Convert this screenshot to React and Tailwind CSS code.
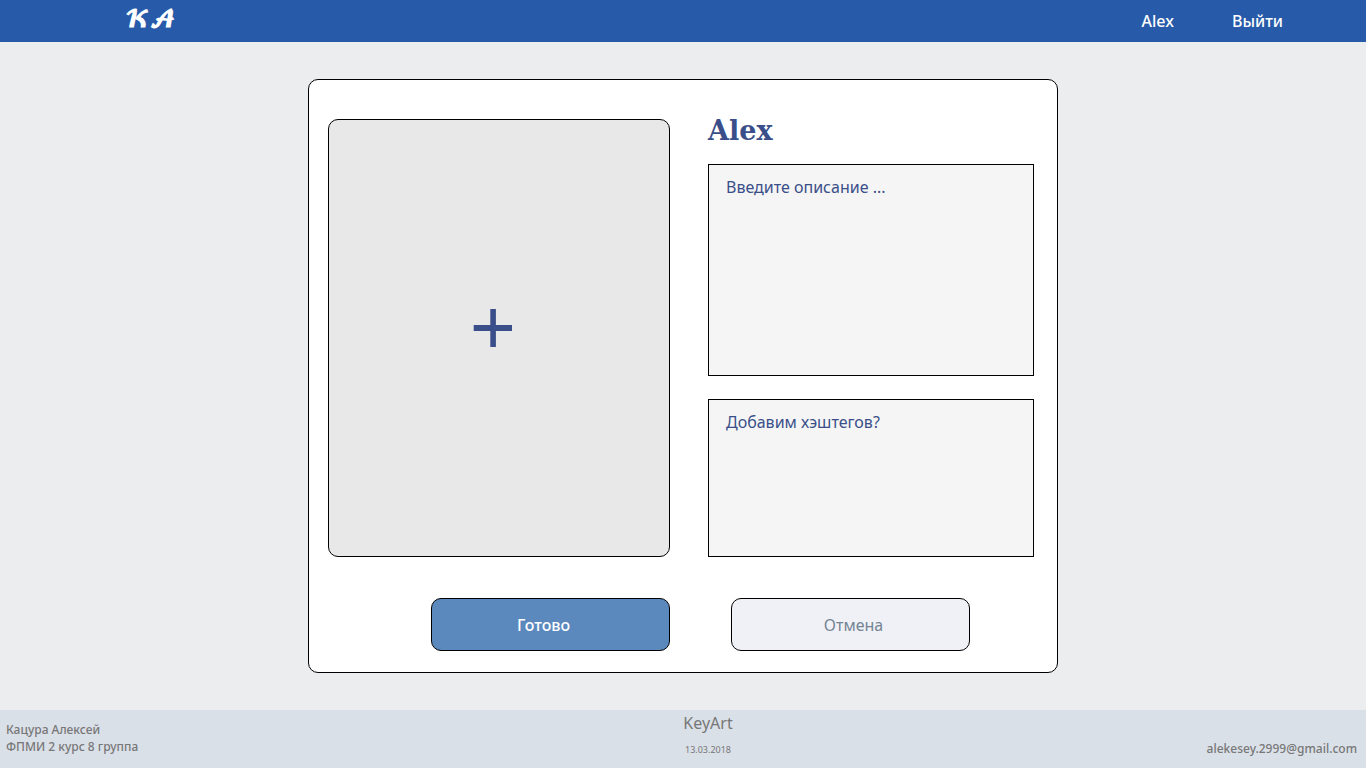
import React from "react";

function Header() {
  return (
    <header className="flex h-[42px] items-center justify-between bg-[#275aa9] pr-[83px] pl-[125px] text-white">
      <a
        href="#home"
        aria-label="KeyArt"
        className="font-['DejaVu_Math_TeX_Gyre','DejaVu_Serif',serif] text-[22px] leading-6 font-bold"
      >
        𝓚𝓐
      </a>
      <nav className="flex gap-[58px] text-base font-medium">
        <a href="#profile">Alex</a>
        <a href="#logout">Выйти</a>
      </nav>
    </header>
  );
}

function Upload() {
  return (
    <button
      type="button"
      aria-label="Добавить изображение"
      className="flex min-h-[438px] items-center justify-center rounded-[10px] border border-black bg-[#e8e8e8] pr-3 pb-5 text-[#3a4f89]"
    >
      <svg width="40" height="40" viewBox="0 0 40 40" fill="currentColor" aria-hidden="true">
        <path d="M17.3 1h5.6v16H39v6H22.9v16h-5.6V23H.7v-6h16.6z" />
      </svg>
    </button>
  );
}

const field =
  "block w-full resize-none border border-black bg-[#f5f5f5] px-[17px] py-2.5 text-base text-[#3a4f89] outline-none placeholder:text-[#3a4f89] placeholder:opacity-100";

function Editor() {
  return (
    <form className="w-full max-w-[750px] rounded-[10px] border border-black bg-white pt-[39px] pr-[23px] pb-[21px] pl-[19px]">
      <div className="grid grid-cols-[342fr_326fr] gap-[38px]">
        <Upload />
        <div className="flex flex-col">
          <h1 className="mb-[21px] font-['DejaVu_Serif',serif] text-[27px] leading-6 font-bold text-[#3a4f89]">
            Alex
          </h1>
          <textarea
            aria-label="Описание"
            placeholder="Введите описание ..."
            className={`${field} mb-[23px] h-[212px]`}
          />
          <textarea
            aria-label="Хэштеги"
            placeholder="Добавим хэштегов?"
            className={`${field} h-[158px]`}
          />
        </div>
      </div>
      <div className="mt-[41px] grid grid-cols-2 gap-[61px] pr-16 pl-[103px] text-base">
        <button
          type="submit"
          className="h-[53px] rounded-[10px] border border-black bg-[#5b89bd] pr-3.5 font-medium text-white"
        >
          Готово
        </button>
        <button
          type="button"
          className="h-[53px] rounded-[10px] border border-black bg-[#f0f1f6] pl-1.5 text-[#748494]"
        >
          Отмена
        </button>
      </div>
    </form>
  );
}

function Footer() {
  return (
    <footer className="grid h-[58px] grid-cols-[1fr_auto_1fr] bg-[#dae0e8] px-1.5 text-[#777777]">
      <p className="pt-[11px] text-xs leading-[17px] font-medium">
        Кацура Алексей
        <br />
        ФПМИ 2 курс 8 группа
      </p>
      <div className="pt-px pl-[50px] text-center">
        <p className="text-base leading-6">KeyArt</p>
        <p className="mt-[9px] text-[9px] leading-3">13.03.2018</p>
      </div>
      <a
        href="mailto:alekesey.2999@gmail.com"
        className="justify-self-end self-end pr-[3px] pb-[11px] text-xs leading-[17px] font-medium"
      >
        alekesey.2999@gmail.com
      </a>
    </footer>
  );
}

export default function App() {
  return (
    <div className="flex min-h-screen flex-col bg-[#ecedef] font-['Noto_Sans',sans-serif]">
      <Header />
      <main className="flex grow items-center justify-center">
        <Editor />
      </main>
      <Footer />
    </div>
  );
}
